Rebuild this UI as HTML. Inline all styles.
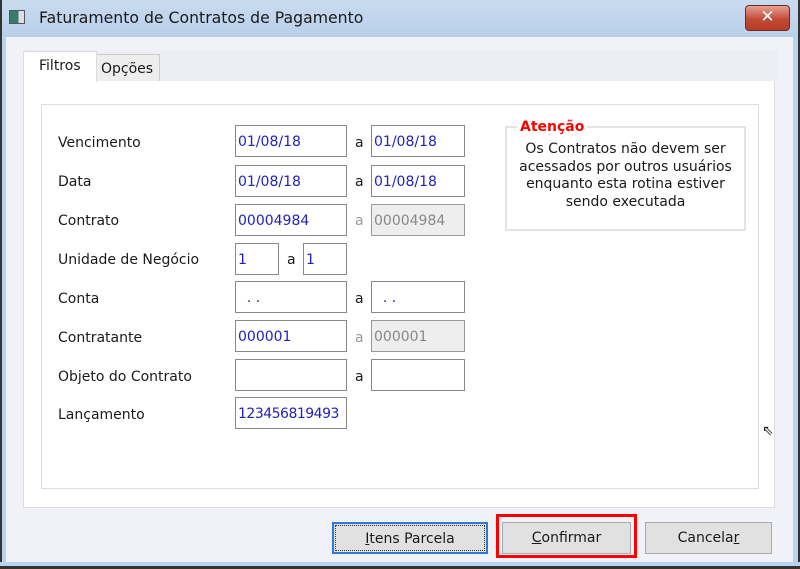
<!DOCTYPE html>
<html><head><meta charset="utf-8"><style>
*{box-sizing:border-box;margin:0;padding:0}
body{width:800px;height:569px;overflow:hidden;background:#f1f2f7;font-family:"DejaVu Sans","Liberation Sans",sans-serif;font-size:13px;color:#1a1a1a;position:relative}
.abs{position:absolute}
#title{left:0;top:0;width:800px;height:37px;background:linear-gradient(#c9dbee,#b9d0ea);border-left:2px solid #333;border-right:2px solid #333}
#title span{position:absolute;left:37px;top:8px;font-size:15.7px;color:#1a1a1a;font-family:"DejaVu Sans",sans-serif}
#icon{left:9px;top:10px;width:16px;height:14px;border:1px solid #555;background:linear-gradient(90deg,#3a7a6a 60%,#dde 60%)}
#close{left:745px;top:5px;width:45px;height:26px;border:1px solid #6b2b22;border-radius:4px;background:linear-gradient(#e8a094,#c24a35 55%,#b83c28);color:#fff;font-weight:bold;font-size:17px;text-align:center;line-height:23px}
#lb{left:0;top:37px;width:6px;height:532px;border-left:2px solid #333;background:#b9d3ee}
#rb{left:793px;top:37px;width:7px;height:532px;border-right:2px solid #333;background:#b9d3ee}
#bb{left:0;top:562px;width:800px;height:7px;border-bottom:3px solid #333;background:#b9d3ee}
#tabbar{left:23px;top:50px;width:755px;height:31px;background:#eceef3}
.tab{font-size:14px}
#t1{left:23px;top:51px;width:74px;height:31px;background:#fff;border:1px solid #ddd;border-bottom:none}
#t1 span{position:absolute;left:15px;top:6px}
#t2{left:96px;top:54px;width:64px;height:27px;background:#eee;border:1px solid #ccc;border-bottom:none}
#t2 span{position:absolute;left:4px;top:6px}
#pane{left:23px;top:81px;width:752px;height:427px;background:#fff;border:1px solid #ddd;border-top:none}
#frame{left:41px;top:104px;width:718px;height:385px;border:1px solid #ddd}
.lbl{position:absolute;left:58px;font-size:14px;margin-top:2px}
.in{position:absolute;height:32px;border:1px solid #888;background:#fff;color:#2222bb;font-size:14px;padding:8px 0 0 2px}
.dis{background:#eee;color:#888;border-color:#999}
.a{position:absolute;left:355px;font-size:14px;margin-top:2px}
.ag{color:#999}
#att{left:505px;top:126px;width:241px;height:105px;border:2px solid #e4e4e4}
#att b{position:absolute;left:10px;top:-9px;background:#fff;color:#f00;padding:0 3px;font-size:14px}
#att p{position:absolute;left:0;top:13px;width:237px;text-align:center;font-size:14px;line-height:17.5px}
.btn{position:absolute;top:522px;height:32px;border:1px solid #aaa;background:#e1e1e1;font-size:14px;text-align:center;line-height:30px}
</style></head><body>
<div id="title" class="abs"><span>Faturamento de Contratos de Pagamento</span></div>
<div id="icon" class="abs"></div>
<div id="close" class="abs">✕</div>
<div id="lb" class="abs"></div><div id="rb" class="abs"></div><div id="bb" class="abs"></div>
<div id="tabbar" class="abs"></div>
<div id="pane" class="abs"></div>
<div id="t2" class="abs tab"><span>Opções</span></div>
<div id="t1" class="abs tab"><span>Filtros</span></div>
<div id="frame" class="abs"></div>

<div class="lbl" style="top:133px">Vencimento</div>
<div class="in" style="left:235px;top:125px;width:112px">01/08/18</div><div class="a" style="top:133px">a</div>
<div class="in" style="left:371px;top:125px;width:94px">01/08/18</div>

<div class="lbl" style="top:172px">Data</div>
<div class="in" style="left:235px;top:165px;width:112px">01/08/18</div><div class="a" style="top:172px">a</div>
<div class="in" style="left:371px;top:165px;width:94px">01/08/18</div>

<div class="lbl" style="top:211px">Contrato</div>
<div class="in" style="left:235px;top:204px;width:112px">00004984</div><div class="a ag" style="top:211px">a</div>
<div class="in dis" style="left:371px;top:204px;width:94px">00004984</div>

<div class="lbl" style="top:250px">Unidade de Negócio</div>
<div class="in" style="left:235px;top:243px;width:44px">1</div><div class="a" style="left:287px;top:250px">a</div>
<div class="in" style="left:303px;top:243px;width:44px">1</div>

<div class="lbl" style="top:289px">Conta</div>
<div class="in" style="left:235px;top:281px;width:112px">&nbsp;&nbsp;. .</div><div class="a" style="top:289px">a</div>
<div class="in" style="left:371px;top:281px;width:94px">&nbsp;&nbsp;. .</div>

<div class="lbl" style="top:328px">Contratante</div>
<div class="in" style="left:235px;top:320px;width:112px">000001</div><div class="a ag" style="top:328px">a</div>
<div class="in dis" style="left:371px;top:320px;width:94px">000001</div>

<div class="lbl" style="top:367px">Objeto do Contrato</div>
<div class="in" style="left:235px;top:359px;width:112px"></div><div class="a" style="top:367px">a</div>
<div class="in" style="left:371px;top:359px;width:94px"></div>

<div class="lbl" style="top:405px">Lançamento</div>
<div class="in" style="left:235px;top:397px;width:112px;letter-spacing:-0.5px">123456819493</div>

<div id="att" class="abs"><b>Atenção</b><p>Os Contratos não devem ser acessados por outros usuários enquanto esta rotina estiver sendo executada</p></div>

<div class="btn" style="left:332px;width:156px;border:2px solid #2a7ad6;outline:1px dotted #333;outline-offset:-4px"><u>I</u>tens Parcela</div>
<div class="abs" style="left:496px;top:514px;width:141px;height:44px;border:3px solid #f00"></div>
<div class="btn" style="left:502px;width:129px"><u>C</u>onfirmar</div>
<div class="btn" style="left:645px;width:127px">Cancela<u>r</u></div>
<div class="abs" style="left:762px;top:423px;font-size:14px">⇖</div>
</body></html>
